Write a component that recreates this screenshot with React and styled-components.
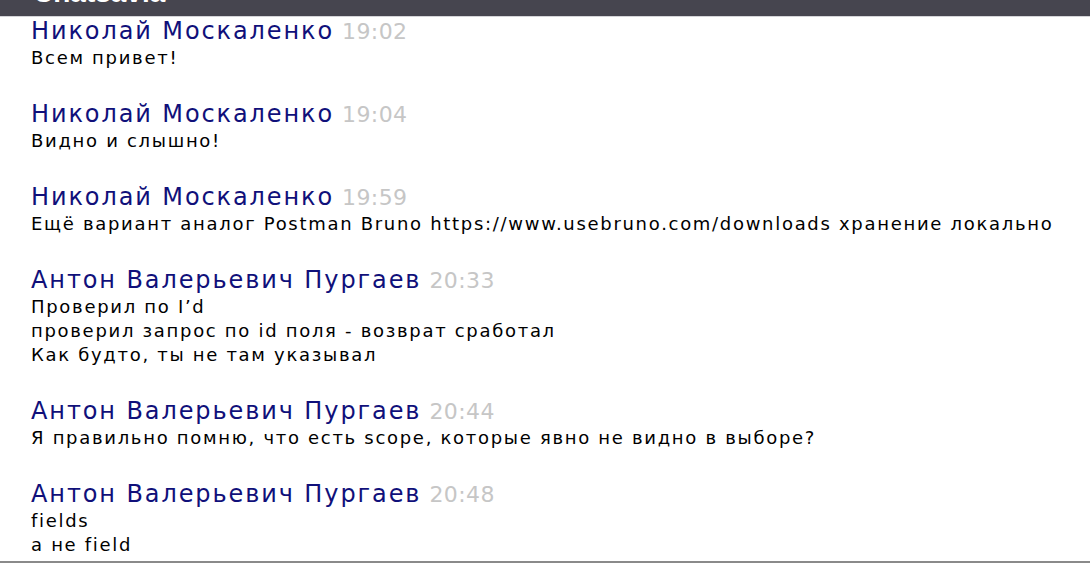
import styled, { createGlobalStyle } from 'styled-components'

const GlobalStyle = createGlobalStyle`
  html, body {
    margin: 0;
    padding: 0;
    background: #fff;
    font-family: "DejaVu Sans", "Liberation Sans", sans-serif;
  }
`

const messages = [
  { id: 1, author: 'Николай Москаленко', time: '19:02', lines: ['Всем привет!'] },
  { id: 2, author: 'Николай Москаленко', time: '19:04', lines: ['Видно и слышно!'] },
  {
    id: 3,
    author: 'Николай Москаленко',
    time: '19:59',
    lines: ['Ещё вариант аналог Postman Bruno https://www.usebruno.com/downloads хранение локально'],
  },
  {
    id: 4,
    author: 'Антон Валерьевич Пургаев',
    time: '20:33',
    lines: ['Проверил по I’d', 'проверил запрос по id поля - возврат сработал', 'Как будто, ты не там указывал'],
  },
  {
    id: 5,
    author: 'Антон Валерьевич Пургаев',
    time: '20:44',
    lines: ['Я правильно помню, что есть scope, которые явно не видно в выборе?'],
  },
  { id: 6, author: 'Антон Валерьевич Пургаев', time: '20:48', lines: ['fields', 'а не field'] },
]

const App = () => {
  return (
    <Page>
      <GlobalStyle />
      <Header>
        <Title>Chatsavia</Title>
      </Header>
      <ChatList>
        {messages.map(item =>
          <Message key={String(item.id)}>
            <NameRow>
              <Author>{item.author}</Author>
              <Time>{item.time}</Time>
            </NameRow>
            {item.lines.map((line, i) =>
              <Text key={i}>{line}</Text>
            )}
          </Message>
        )}
      </ChatList>
    </Page>
  )
}

export default App

const Page = styled.div`
  width: 1090px;
  height: 584px;
  overflow: hidden;
  display: flex;
  flex-direction: column;
`

const Header = styled.div`
  height: 16px;
  flex-shrink: 0;
  background: #46454f;
  border-bottom: 1px solid #d4d4d8;
  overflow: hidden;
  display: flex;
  align-items: flex-start;
  padding-left: 33px;
`

const Title = styled.div`
  color: #fff;
  font-family: "Liberation Sans", Arial, sans-serif;
  font-weight: 700;
  font-size: 28px;
  line-height: 28px;
  margin-top: -21px;
  flex-shrink: 0;
`

const ChatList = styled.div`
  height: 546px;
  flex-shrink: 0;
  box-sizing: border-box;
  border-bottom: 2px solid #8a8a8a;
  padding-left: 31px;
  display: flex;
  flex-direction: column;
  gap: 30px;
  overflow: hidden;
`

const Message = styled.div`
  display: flex;
  flex-direction: column;
`

const NameRow = styled.div`
  display: flex;
  align-items: baseline;
  gap: 8px;
  line-height: 29px;
  font-size: 24px;
`

const Author = styled.span`
  color: #10107a;
  letter-spacing: 1.9px;
`

const Time = styled.span`
  color: #c6c6c6;
  font-size: 22px;
  letter-spacing: 0.4px;
`

const Text = styled.div`
  font-size: 18px;
  line-height: 24px;
  letter-spacing: 1.7px;
  color: #000;
`
